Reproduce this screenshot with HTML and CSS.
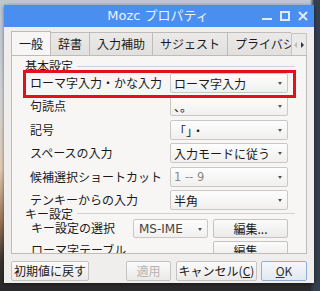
FILE: index.html
```html
<!DOCTYPE html>
<html lang="ja">
<head>
    <meta charset="UTF-8">
    <title>Mozc プロパティ</title>
    <link rel="stylesheet" href="styles.css">
</head>
<body>
    <div class="window">
        <div class="titlebar">
            <span></span>
            <span class="title">Mozc プロパティ</span>
            <div class="controls">
                <svg width="10" height="10" viewBox="0 0 10 10"><rect x="0" y="7" width="10" height="2" fill="#dfe9f8"/></svg>
                <svg width="10" height="10" viewBox="0 0 10 10"><rect x="1" y="1" width="8" height="8" fill="none" stroke="#dfe9f8" stroke-width="2"/></svg>
                <svg width="10" height="10" viewBox="0 0 10 10"><path d="M1 1 L9 9 M9 1 L1 9" stroke="#dfe9f8" stroke-width="2"/></svg>
            </div>
        </div>

        <div class="content">
            <!-- Onglets -->
            <div class="tabbar">
                <div class="tabs">
                    <div class="tab active">一般</div>
                    <div class="tab">辞書</div>
                    <div class="tab">入力補助</div>
                    <div class="tab">サジェスト</div>
                    <div class="tab">プライバシー</div>
                </div>
                <div class="tab-scroll">
                    <span class="arrow left"></span>
                    <span class="arrow right"></span>
                </div>
            </div>

            <div class="pane">
                <div class="legend legend-first"><span>基本設定</span></div>
                <div class="rows">
                    <span class="label">ローマ字入力・かな入力</span>
                    <div class="combo">ローマ字入力</div>
                    <span class="label">句読点</span>
                    <div class="combo">、。</div>
                    <span class="label">記号</span>
                    <div class="combo">「」・</div>
                    <span class="label">スペースの入力</span>
                    <div class="combo">入力モードに従う</div>
                    <span class="label">候補選択ショートカット</span>
                    <div class="combo disabled">1 -- 9</div>
                    <span class="label">テンキーからの入力</span>
                    <div class="combo">半角</div>
                </div>

                <div class="legend legend-key"><span>キー設定</span></div>
                <div class="key-row">
                    <span class="label">キー設定の選択</span>
                    <div class="combo small latin">MS-IME</div>
                    <div class="button edit">編集...</div>
                </div>
                <div class="key-row">
                    <span class="label">ローマ字テーブル</span>
                    <div class="button edit">編集...</div>
                </div>

                <!-- Cadre rouge de mise en évidence -->
                <div class="highlight"></div>
            </div>

            <div class="actions">
                <div class="button reset">初期値に戻す</div>
                <div class="spacer"></div>
                <div class="button apply">適用</div>
                <div class="button cancel">キャンセル(<u>C</u>)</div>
                <div class="button ok"><u>O</u>K</div>
            </div>
        </div>
    </div>
</body>
</html>
```

FILE: styles.css
```css
/* Style global */
body {
    margin: 0;
    width: 320px;
    height: 291px;
    overflow: hidden;
    font-family: "Noto Sans CJK JP", "DejaVu Sans", sans-serif;
    font-size: 12px;
    color: #1a1a1a;
    background:
        linear-gradient(to right, rgba(0, 0, 0, 0) 310px, #34404e 314px),
        linear-gradient(to bottom, #bcc8d6 0%, #d8d8da 35%, #e6cfb8 58%, #9a7658 76%, #3a3230 90%, #29292c 100%);
}

.window {
    margin: 5px 0 0 4px;
    width: 310px;
    height: 278px;
    background-color: #efeeec;
    box-shadow: 0 1px 4px rgba(0, 0, 0, 0.5);
    display: flex;
    flex-direction: column;
}

.titlebar {
    height: 22px;
    background-color: #4a8ff0;
    display: grid;
    grid-template-columns: 1fr auto 1fr;
    align-items: center;
    color: #eaf2fd;
}

.title {
    font-family: "DejaVu Sans", "Noto Sans CJK JP", sans-serif;
    font-size: 13px;
    line-height: 22px;
    padding-right: 2px;
}

.controls {
    justify-self: end;
    display: flex;
    gap: 8px;
    padding-right: 6px;
    align-items: center;
}

.controls svg {
    display: block;
}

.content {
    padding: 4px 7px 0 7px;
}

/* Onglets */
.tabbar {
    display: flex;
    height: 24px;
    align-items: flex-end;
}

.tabs {
    display: flex;
    align-items: flex-end;
    width: 281px;
    overflow: hidden;
    position: relative;
    z-index: 1;
}

.tab {
    flex-shrink: 0;
    height: 22px;
    line-height: 22px;
    padding: 0 7px;
    border: 1px solid #bdbcba;
    border-bottom: none;
    margin-right: -1px;
    background: linear-gradient(#ebeae8, #e1e0de);
    white-space: nowrap;
}

.tab.active {
    height: 24px;
    line-height: 24px;
    margin-bottom: -1px;
    background: #f7f6f5;
}

.tab-scroll {
    display: flex;
    height: 22px;
    width: 16px;
    border: 1px solid #c6c5c3;
    border-bottom: none;
    background: #eceae8;
    box-sizing: border-box;
}

.arrow {
    flex: 1;
    display: flex;
    align-items: center;
    justify-content: center;
}

.arrow::before {
    content: "";
    border-top: 3px solid transparent;
    border-bottom: 3px solid transparent;
}

.arrow.left::before {
    border-right: 3px solid #bbb;
}

.arrow.right::before {
    border-left: 3px solid #333;
}

.pane {
    position: relative;
    height: 199px;
    box-sizing: border-box;
    border: 1px solid #bdbcba;
    background-color: #f7f6f5;
    overflow: hidden;
    padding: 0 11px 0 13px;
}

.legend {
    display: flex;
    align-items: center;
    gap: 4px;
    line-height: 14px;
}

.legend::after {
    content: "";
    flex: 1;
    height: 1px;
    background-color: #d2d1cf;
}

.legend-first {
    height: 14px;
    margin-top: 3px;
}

.legend-key {
    height: 8px;
    margin-top: 0;
}

.rows {
    display: grid;
    grid-template-columns: 1fr 118px;
    grid-auto-rows: 20px;
    row-gap: 3.4px;
    align-items: center;
    margin: 0 7px 0 5px;
}

.label {
    line-height: 20px;
    white-space: nowrap;
}

.combo {
    height: 20px;
    line-height: 19px;
    box-sizing: border-box;
    border: 1px solid #c9c8c6;
    border-radius: 2px;
    background: linear-gradient(#fdfdfd, #f1f0ef);
    padding: 0 3px;
    position: relative;
    white-space: nowrap;
}

.combo::after {
    content: "";
    position: absolute;
    right: 5px;
    top: 8px;
    border-left: 2.5px solid transparent;
    border-right: 2.5px solid transparent;
    border-top: 3px solid #555;
}

.combo.disabled {
    color: #8a8a8a;
    font-family: "DejaVu Sans", sans-serif;
    font-size: 11.5px;
}

.combo.latin {
    font-family: "DejaVu Sans", sans-serif;
    font-size: 12px;
    color: #444;
}

.key-row {
    display: flex;
    align-items: center;
    height: 19px;
    margin: 0 7px 3px 5px;
}

.legend-key + .key-row {
    margin-top: 1px;
}

.key-row .label {
    flex: 1;
    margin-left: 1px;
}

.combo.small {
    width: 75px;
    height: 19px;
    line-height: 18px;
    margin-right: 5px;
    padding-left: 5px;
}

.button {
    box-sizing: border-box;
    height: 20px;
    line-height: 18px;
    border: 1px solid #c4c3c1;
    border-radius: 2px;
    background: linear-gradient(#fbfbfb, #ebeae9);
    text-align: center;
    white-space: nowrap;
}

.button.edit {
    width: 75px;
    height: 19px;
    line-height: 17px;
}

/* Cadre rouge */
.highlight {
    position: absolute;
    left: 11px;
    top: 14px;
    width: 273px;
    height: 28px;
    box-sizing: border-box;
    border: 3px solid #e3111b;
}

.actions {
    display: flex;
    gap: 5px;
    margin-top: 7px;
}

.spacer {
    flex: 1;
}

.button.reset {
    width: 78px;
}

.button.apply {
    width: 45px;
    color: #b4b4b4;
}

.button.cancel {
    width: 81px;
    margin-right: -1px;
}

.button.ok {
    width: 46px;
    border-color: #8fb0d4;
    background: linear-gradient(#f4f7fb, #e2e9f1);
    color: #333;
}

u {
    text-underline-offset: 1px;
}
```
